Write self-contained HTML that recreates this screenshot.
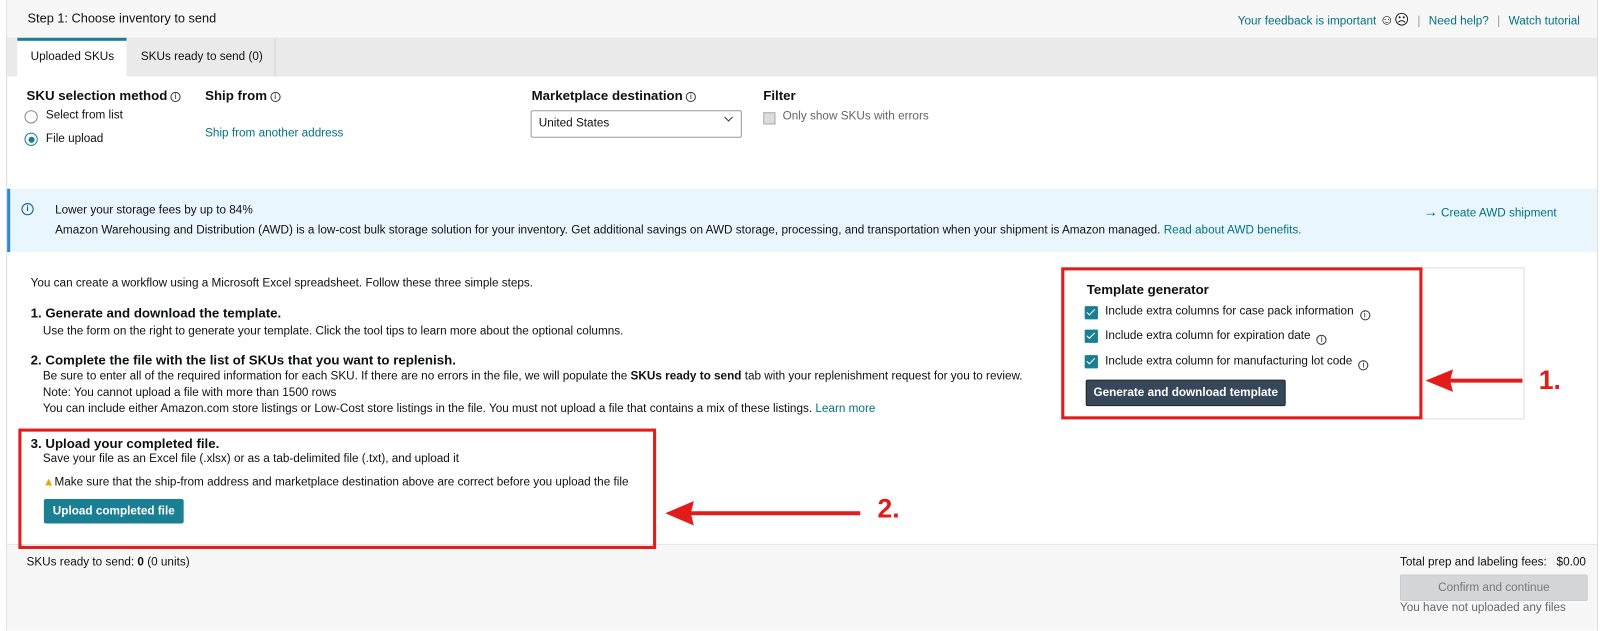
<!DOCTYPE html>
<html><head><meta charset="utf-8">
<style>
*{margin:0;padding:0;box-sizing:border-box}
body{width:1600px;height:630px;background:#fff;font-family:"Liberation Sans",Arial,sans-serif;font-size:11.5px;color:#0f1111;position:relative;overflow:hidden}
#w{position:absolute;left:0;top:0;width:1568px;height:618px;transform:scale(1.0204);transform-origin:0 0}
.a{position:absolute;white-space:nowrap}
.l{color:#007185}
.b{font-weight:bold}
.h{font-size:13px;font-weight:bold}
.info{display:inline-block;width:10px;height:10px;border:1px solid #333;border-radius:50%;font-size:8px;line-height:8px;text-align:center;font-weight:normal;vertical-align:1px;margin-left:3px}
.cb{position:absolute;width:13px;height:13px;background:#1a7f92;border-radius:1px}
.cb:after{content:"";position:absolute;left:4px;top:1px;width:3px;height:7px;border:solid #fff;border-width:0 1.5px 1.5px 0;transform:rotate(45deg)}
</style></head><body><div id="w">
<div class="a" style="left:6px;top:0;width:1560px;height:618px;border-left:1px solid #ddd;border-right:1px solid #ddd"></div>
<div class="a" style="left:7px;top:0;width:1558px;height:37px;background:#f7f7f7"></div>
<div class="a" style="left:27px;top:11px;font-size:12.5px">Step 1: Choose inventory to send</div>
<div class="a" style="left:1213px;top:11px;color:#007185">Your feedback is important <span style="color:#111;font-size:14px">☺☹</span> <span style="color:#999;margin:0 5px">|</span> Need help? <span style="color:#999;margin:0 5px">|</span> Watch tutorial</div>
<div class="a" style="left:7px;top:37px;width:1558px;height:38px;background:#eaeaeb"></div>
<div class="a" style="left:17px;top:37px;width:107px;height:38px;background:#fff;border-top:3px solid #1a7f92"></div>
<div class="a" style="left:30px;top:50px">Uploaded SKUs</div>
<div class="a" style="left:124px;top:37px;width:146px;height:38px;border-right:1px solid #d5d5d5"></div>
<div class="a" style="left:138px;top:50px">SKUs ready to send (0)</div>
<div class="a h" style="left:26px;top:86px">SKU selection method<span class="info">i</span></div>
<div class="a" style="left:24px;top:108px;width:13px;height:13px;border:1px solid #888;border-radius:50%"></div>
<div class="a" style="left:45px;top:107px">Select from list</div>
<div class="a" style="left:24px;top:130px;width:13px;height:13px;border:1px solid #1a7f92;border-radius:50%"><div style="margin:2.5px;width:6px;height:6px;border-radius:50%;background:#1a7f92"></div></div>
<div class="a" style="left:45px;top:130px">File upload</div>
<div class="a h" style="left:201px;top:86px">Ship from<span class="info">i</span></div>
<div class="a l" style="left:201px;top:125px">Ship from another address</div>
<div class="a h" style="left:521px;top:86px">Marketplace destination<span class="info">i</span></div>
<div class="a" style="left:520px;top:108px;width:207px;height:27px;border:1px solid #999;border-radius:2px;background:#fff"></div>
<div class="a" style="left:528px;top:115px">United States</div>
<div class="a" style="left:711px;top:112px;width:6px;height:6px;border:solid #333;border-width:0 1.5px 1.5px 0;transform:rotate(45deg)"></div>
<div class="a h" style="left:748px;top:86px">Filter</div>
<div class="a" style="left:748px;top:110px;width:12px;height:12px;border:1px solid #aaa;background:#ddd"></div>
<div class="a" style="left:767px;top:108px;color:#666">Only show SKUs with errors</div>
<div class="a" style="left:7px;top:185px;width:1558px;height:62px;background:#eaf6fd;border-left:3px solid #2b8ad8"></div>
<div class="a" style="left:21px;top:199px;width:12px;height:12px;border:1.5px solid #0a5a8a;border-radius:50%;font-size:8px;line-height:9px;text-align:center;color:#0a5a8a;font-weight:bold">i</div>
<div class="a" style="left:54px;top:200px">Lower your storage fees by up to 84%</div>
<div class="a" style="left:54px;top:220px">Amazon Warehousing and Distribution (AWD) is a low-cost bulk storage solution for your inventory. Get additional savings on AWD storage, processing, and transportation when your shipment is Amazon managed. <span class="l">Read about AWD benefits.</span></div>
<div class="a l" style="left:1395px;top:199px"><span style="font-size:14px">→</span> Create AWD shipment</div>
<div class="a" style="left:30px;top:272px">You can create a workflow using a Microsoft Excel spreadsheet. Follow these three simple steps.</div>
<div class="a h" style="left:30px;top:299px">1. Generate and download the template.</div>
<div class="a" style="left:42px;top:319px">Use the form on the right to generate your template. Click the tool tips to learn more about the optional columns.</div>
<div class="a h" style="left:30px;top:345px">2. Complete the file with the list of SKUs that you want to replenish.</div>
<div class="a" style="left:42px;top:363px">Be sure to enter all of the required information for each SKU. If there are no errors in the file, we will populate the <b>SKUs ready to send</b> tab with your replenishment request for you to review.</div>
<div class="a" style="left:42px;top:379px">Note: You cannot upload a file with more than 1500 rows</div>
<div class="a" style="left:42px;top:395px">You can include either Amazon.com store listings or Low-Cost store listings in the file. You must not upload a file that contains a mix of these listings. <span class="l">Learn more</span></div>
<div class="a h" style="left:30px;top:427px">3. Upload your completed file.</div>
<div class="a" style="left:42px;top:444px">Save your file as an Excel file (.xlsx) or as a tab-delimited file (.txt), and upload it</div>
<div class="a" style="left:42px;top:467px"><span style="color:#f0a800">▲</span>Make sure that the ship-from address and marketplace destination above are correct before you upload the file</div>
<div class="a" style="left:43px;top:489px;width:137px;height:24px;background:#1a7f92;border-radius:2px;color:#fff;font-weight:bold;text-align:center;line-height:24px">Upload completed file</div>
<div class="a" style="left:1042px;top:262px;width:452px;height:149px;border:1px solid #ddd"></div>
<div class="a h" style="left:1065px;top:276px">Template generator</div>
<div class="cb" style="left:1063px;top:300px"></div>
<div class="a" style="left:1083px;top:299px">Include extra columns for case pack information<span class="info" style="margin-left:6px;vertical-align:-3px">i</span></div>
<div class="cb" style="left:1063px;top:323px"></div>
<div class="a" style="left:1083px;top:323px">Include extra column for expiration date<span class="info" style="margin-left:6px;vertical-align:-3px">i</span></div>
<div class="cb" style="left:1063px;top:348px"></div>
<div class="a" style="left:1083px;top:348px">Include extra column for manufacturing lot code<span class="info" style="margin-left:6px;vertical-align:-3px">i</span></div>
<div class="a" style="left:1064px;top:372px;width:196px;height:26px;background:#37475a;border:1px solid #222;border-radius:2px;color:#fff;font-weight:bold;text-align:center;line-height:24px">Generate and download template</div>
<div class="a" style="left:1040px;top:262px;width:354px;height:149px;border:3px solid #e21b1b"></div>
<div class="a" style="left:7px;top:533px;width:1558px;height:85px;background:#f7f7f7;border-top:1px solid #e3e3e3"></div>
<div class="a" style="left:26px;top:545px">SKUs ready to send: <b>0</b> (0 units)</div>
<div class="a" style="left:1372px;top:545px">Total prep and labeling fees: &nbsp; $0.00</div>
<div class="a" style="left:1372px;top:563px;width:184px;height:26px;background:#d5d6d8;border:1px solid #ccc;border-radius:2px;color:#777;text-align:center;line-height:24px">Confirm and continue</div>
<div class="a" style="left:1372px;top:590px;color:#666">You have not uploaded any files</div>
<div class="a" style="left:18px;top:420px;width:625px;height:118px;border:3px solid #e21b1b"></div>
<svg class="a" style="left:640px;top:360px" width="920" height="160">
<line x1="770" y1="13" x2="852" y2="13" stroke="#e21b1b" stroke-width="4"/>
<polygon points="757,13 784,2 781,13 784,24" fill="#e21b1b"/>
<line x1="30" y1="143" x2="203" y2="143" stroke="#e21b1b" stroke-width="4"/>
<polygon points="12,143 40,131 37,143 40,155" fill="#e21b1b"/>
</svg>
<div class="a" style="left:1508px;top:357px;color:#e21b1b;font-size:26px;font-weight:bold">1.</div>
<div class="a" style="left:860px;top:483px;color:#e21b1b;font-size:26px;font-weight:bold">2.</div>
</div></body></html>
